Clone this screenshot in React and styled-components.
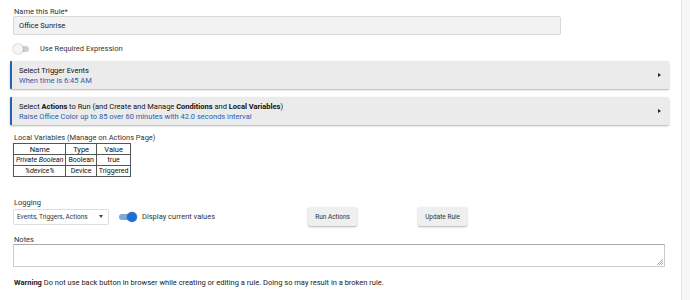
import React from "react";
import styled, { createGlobalStyle } from "styled-components";

const Global = createGlobalStyle`
  html, body { margin: 0; padding: 0; background: #fff; }
  body { font-family: Roboto, "Noto Sans", sans-serif; color: #222; }
`;

const Page = styled.div`
  display: flex;
  width: 690px;
  height: 300px;
  overflow: hidden;
`;

const Main = styled.div`
  width: 682px;
  border-right: 1px solid #e4e4e4;
  padding: 7px 0 0 10px;
  box-sizing: border-box;
`;

const Side = styled.div`
  flex: 1;
  background: #f7f7f7;
`;

const Label = styled.div`
  font-size: 7.5px;
  color: #333;
  margin-left: 4px;
  margin-top: ${(p) => p.$mt || 0}px;
  line-height: 9px;
`;

const TextInput = styled.div`
  margin: 0 0 0 3px;
  width: 548px;
  height: 19px;
  background: #f2f2f2;
  border: 1px solid #d8d8d8;
  border-radius: 2px;
  box-sizing: border-box;
  font-size: 7.5px;
  display: flex;
  align-items: center;
  padding-left: 5px;
  color: #222;
`;

const ToggleRow = styled.div`
  display: flex;
  align-items: center;
  gap: ${(p) => p.$gap || 10}px;
  margin-left: ${(p) => p.$ml || 0}px;
  margin-top: ${(p) => p.$mt || 0}px;
  font-size: 7.5px;
  color: #333;
`;

const Track = styled.div`
  position: relative;
  width: 14px;
  height: 6px;
  border-radius: 3px;
  background: ${(p) => (p.$on ? "#7ea9dc" : "#cfcfcf")};
`;

const Knob = styled.div`
  position: absolute;
  top: -2px;
  left: ${(p) => (p.$on ? "8px" : "-2px")};
  width: 10px;
  height: 10px;
  border-radius: 50%;
  background: ${(p) => (p.$on ? "#1f6fd0" : "#f5f5f5")};
  box-shadow: 0 0 1.5px rgba(0, 0, 0, 0.45);
`;

const Panel = styled.div`
  width: 659px;
  height: 28px;
  background: #ebebeb;
  border-left: 2px solid #2563b5;
  box-shadow: 0 1px 2px rgba(0, 0, 0, 0.3);
  border-radius: 1px;
  box-sizing: border-box;
  display: flex;
  align-items: center;
  justify-content: space-between;
  padding: 0 8px 0 7px;
  margin-top: ${(p) => p.$mt}px;
`;

const PanelText = styled.div`
  display: flex;
  flex-direction: column;
  gap: 1px;
  font-size: 7.5px;
  line-height: 9px;
  color: #111;
`;

const Sub = styled.div`
  color: #2a5db0;
`;

const Arrow = styled.div`
  width: 0;
  height: 0;
  border-top: 2px solid transparent;
  border-bottom: 2px solid transparent;
  border-left: 3px solid #222;
`;

const VarTable = styled.table`
  margin: 1px 0 0 3px;
  border-collapse: collapse;
  border: 1px solid #333;
  font-size: 7px;
  color: #111;
  td, th {
    border: 1px solid #555;
    padding: 0 2px;
    height: 10px;
    text-align: center;
    font-weight: normal;
    line-height: 9px;
  }
  th { font-size: 7.5px; }
`;

const Controls = styled.div`
  display: flex;
  align-items: center;
  margin-top: 0;
`;

const Select = styled.div`
  margin-left: 3px;
  width: 96px;
  height: 16px;
  box-sizing: border-box;
  border: 1px solid #ddd;
  border-radius: 2px;
  display: flex;
  align-items: center;
  justify-content: space-between;
  padding: 0 5px 0 3px;
  font-size: 6.5px;
  color: #333;
`;

const Caret = styled.div`
  width: 0;
  height: 0;
  border-left: 2.5px solid transparent;
  border-right: 2.5px solid transparent;
  border-top: 3px solid #444;
`;

const Button = styled.div`
  width: 49px;
  height: 19px;
  background: #efefef;
  box-shadow: 0 1px 2px rgba(0, 0, 0, 0.3);
  border-radius: 2px;
  font-size: 6.5px;
  color: #333;
  display: flex;
  align-items: center;
  justify-content: center;
  margin-left: ${(p) => p.$ml}px;
`;

const TextArea = styled.div`
  position: relative;
  margin-left: 3px;
  width: 652px;
  height: 23px;
  box-sizing: border-box;
  border: 1px solid #ccc;
  border-top: 1px solid #aaa;
`;

const Grip = styled.svg`
  position: absolute;
  right: 1px;
  bottom: 1px;
`;

const Warning = styled.div`
  margin: 11px 0 0 4px;
  font-size: 7.5px;
  color: #222;
  b { font-weight: 700; }
`;

export default function App() {
  return (
    <>
      <Global />
      <Page>
        <Main>
          <Label>Name this Rule*</Label>
          <TextInput>Office Sunrise</TextInput>
          <ToggleRow $gap={11} $ml={5} $mt={9}>
            <Track>
              <Knob />
            </Track>
            Use Required Expression
          </ToggleRow>
          <Panel $mt={8}>
            <PanelText>
              <div>Select Trigger Events</div>
              <Sub>When time is 6:45 AM</Sub>
            </PanelText>
            <Arrow />
          </Panel>
          <Panel $mt={8}>
            <PanelText>
              <div>
                Select <b>Actions</b> to Run (and Create and Manage <b>Conditions</b> and{" "}
                <b>Local Variables</b>)
              </div>
              <Sub>Raise Office Color up to 85 over 60 minutes with 42.0 seconds interval</Sub>
            </PanelText>
            <Arrow />
          </Panel>
          <Label $mt={8}>Local Variables (Manage on Actions Page)</Label>
          <VarTable>
            <thead>
              <tr>
                <th>Name</th>
                <th>Type</th>
                <th>Value</th>
              </tr>
            </thead>
            <tbody>
              <tr>
                <td><i>Private Boolean</i></td>
                <td>Boolean</td>
                <td>true</td>
              </tr>
              <tr>
                <td><i>%device%</i></td>
                <td>Device</td>
                <td>Triggered</td>
              </tr>
            </tbody>
          </VarTable>
          <Label $mt={21}>Logging</Label>
          <Controls>
            <Select>
              Events, Triggers, Actions
              <Caret />
            </Select>
            <ToggleRow $gap={9} $ml={10}>
              <Track $on>
                <Knob $on />
              </Track>
              Display current values
            </ToggleRow>
            <Button $ml={93}>Run Actions</Button>
            <Button $ml={61}>Update Rule</Button>
          </Controls>
          <Label $mt={9}>Notes</Label>
          <TextArea>
            <Grip width="6" height="6" viewBox="0 0 6 6">
              <path d="M6 0 L0 6 M6 2 L2 6 M6 4 L4 6" stroke="#999" strokeWidth="0.8" />
            </Grip>
          </TextArea>
          <Warning>
            <b>Warning</b> Do not use back button in browser while creating or editing a rule. Doing so may
            result in a broken rule.
          </Warning>
        </Main>
        <Side />
      </Page>
    </>
  );
}
